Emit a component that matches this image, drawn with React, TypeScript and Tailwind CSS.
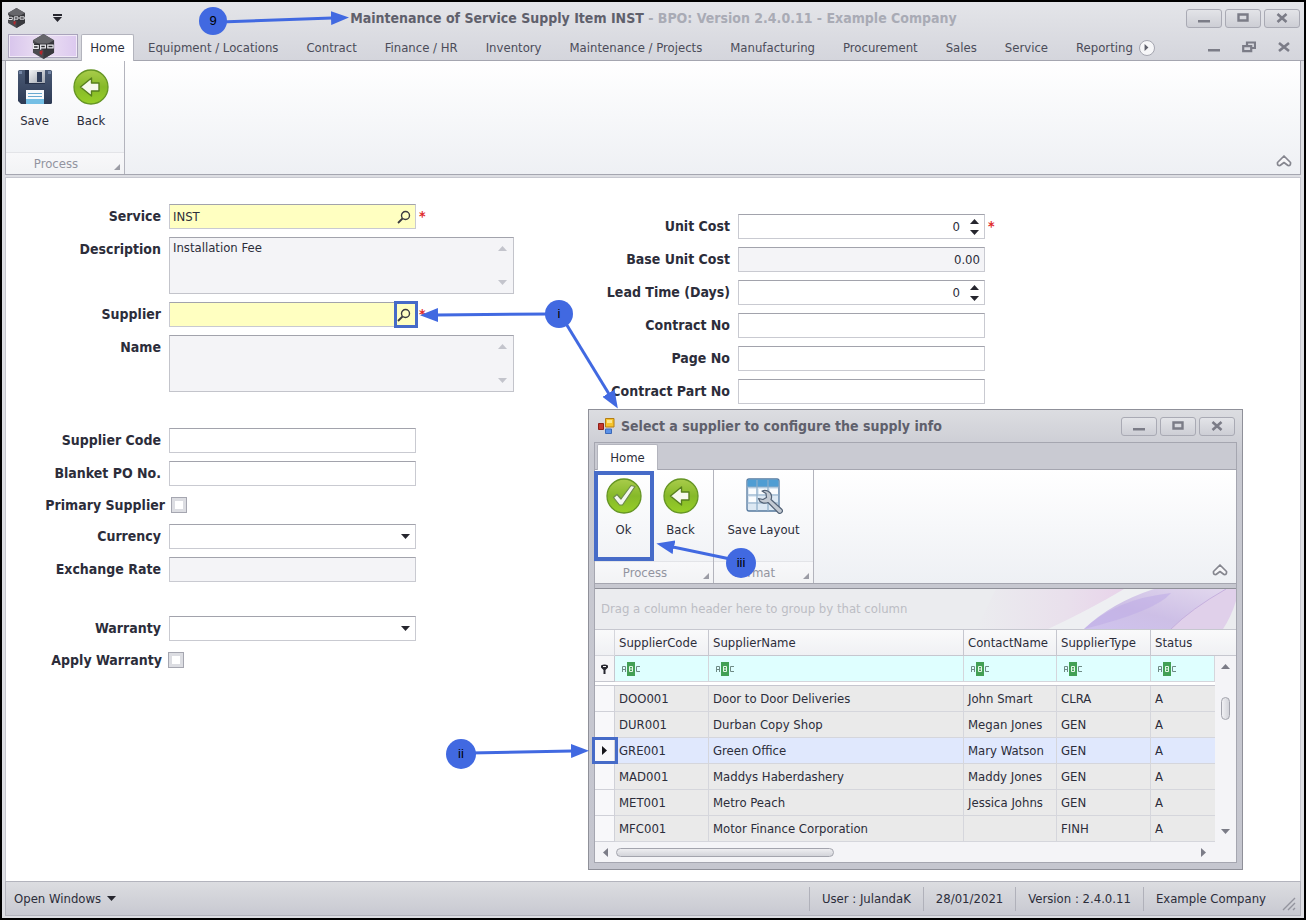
import type { ReactNode } from "react";

const MENU = [
  "Equipment / Locations",
  "Contract",
  "Finance / HR",
  "Inventory",
  "Maintenance / Projects",
  "Manufacturing",
  "Procurement",
  "Sales",
  "Service",
  "Reporting",
];

const SUPPLIERS = [
  ["DOO001", "Door to Door Deliveries", "John Smart", "CLRA", "A"],
  ["DUR001", "Durban Copy Shop", "Megan Jones", "GEN", "A"],
  ["GRE001", "Green Office", "Mary Watson", "GEN", "A"],
  ["MAD001", "Maddys Haberdashery", "Maddy Jones", "GEN", "A"],
  ["MET001", "Metro Peach", "Jessica Johns", "GEN", "A"],
  ["MFC001", "Motor Finance Corporation", "", "FINH", "A"],
];

const COLUMNS = ["SupplierCode", "SupplierName", "ContactName", "SupplierType", "Status"];

function Logo({ className }: { className: string }) {
  return (
    <svg viewBox="0 0 24 26" className={className} aria-hidden="true">
      <path d="M12 0 23 6.500v13L12 26 1 19.500v-13z" fill="#4b4b50" />
      <path d="M12 0 23 6.500 12 13 1 6.500z" fill="#66666b" />
      <path d="M12 13 23 6.500v13L12 26z" fill="#39393e" />
      <path d="M1 10h22v6H1z" fill="#2c2c30" />
      <path
        d="M1.500 9.500v5.500h5v-3h-5M9 16.500v-5h5v3h-5M16.500 11.500h5.500v3h-5.500z"
        fill="none"
        stroke="#e9e9ee"
        strokeWidth="1.300"
      />
      <path d="m8 18 3-1v2l-1 3-2-2z" fill="#b3262c" />
    </svg>
  );
}

function Triangle({ dir, className }: { dir: "up" | "down" | "left" | "right"; className: string }) {
  const d = {
    up: "M0 5 4.500 0 9 5z",
    down: "M0 0h9L4.500 5z",
    left: "M5 0v9L0 4.500z",
    right: "M0 0l5 4.500L0 9z",
  }[dir];
  const tall = dir === "left" || dir === "right";
  return (
    <svg
      width={tall ? 5 : 9}
      height={tall ? 9 : 5}
      viewBox={tall ? "0 0 5 9" : "0 0 9 5"}
      className={className}
      aria-hidden="true"
    >
      <path d={d} fill="currentColor" />
    </svg>
  );
}

function BackIcon() {
  return (
    <svg width="36" height="36" viewBox="0 0 36 36" aria-hidden="true">
      <defs>
        <linearGradient id="green" x1="0" y1="0" x2="0" y2="1">
          <stop offset="0" stopColor="#a9cc4b" />
          <stop offset="0.500" stopColor="#86b929" />
          <stop offset="1" stopColor="#97cf27" />
        </linearGradient>
      </defs>
      <circle cx="18" cy="18" r="17" fill="url(#green)" stroke="#659524" strokeWidth="1.300" />
      <path
        d="M7.500 18 18.500 9v5H26v8h-7.500v5z"
        fill="#f6f9ee"
        stroke="#577f1d"
        strokeWidth="1.400"
        strokeLinejoin="round"
      />
    </svg>
  );
}

function OkIcon() {
  return (
    <svg width="36" height="36" viewBox="0 0 36 36" aria-hidden="true">
      <circle cx="18" cy="18" r="17" fill="url(#green)" stroke="#659524" strokeWidth="1.300" />
      <path
        d="m7.500 19.500 3.500-3 4 4.500L25 7.500l4 1-12.500 18.500h-3z"
        fill="#f3f6f0"
        stroke="#6c8a4a"
        strokeWidth="1.200"
        strokeLinejoin="round"
      />
    </svg>
  );
}

function SaveIcon() {
  return (
    <svg width="36" height="36" viewBox="0 0 36 36" aria-hidden="true">
      <defs>
        <linearGradient id="disk" x1="0" y1="0" x2="0" y2="1">
          <stop offset="0" stopColor="#4a5a75" />
          <stop offset="1" stopColor="#2d3a54" />
        </linearGradient>
        <linearGradient id="metal" x1="0" y1="0" x2="1" y2="1">
          <stop offset="0" stopColor="#f2f4f6" />
          <stop offset="1" stopColor="#9fa5ae" />
        </linearGradient>
      </defs>
      <path d="M1 2.500Q1 1 2.500 1h31Q35 1 35 2.500v31q0 1.500-1.500 1.500H4l-3-3z" fill="url(#disk)" />
      <path d="M2 2h3v3H2zM31 2h3v3h-3z" fill="#7486a5" />
      <path d="M8 1h20v14H8z" fill="#26324a" />
      <path d="M12 1h16v13H12z" fill="url(#metal)" />
      <path d="M20 3h5v10h-5z" fill="#303e59" />
      <path d="M9 21h18v14H9z" fill="#f8fafc" />
      <path d="M9 30h18v5H9z" fill="#74bfe5" />
      <path d="M11 24.500h14M11 27.500h14" stroke="#69a9d0" strokeWidth="1" />
    </svg>
  );
}

function LayoutIcon() {
  return (
    <svg width="38" height="38" viewBox="0 0 38 38" aria-hidden="true">
      <path d="M2 4q0-2 2-2h28q2 0 2 2v28q0 2-2 2H4q-2 0-2-2z" fill="#dce8f3" stroke="#55799f" strokeWidth="1.300" />
      <path d="M2.500 4Q2.500 2.500 4 2.500h28q1.500 0 1.500 1.500v6h-31z" fill="#4f9dd3" />
      <path d="M2 10h32M2 18h32M2 26h32M12 3v31M23 3v31" stroke="#8dacc8" strokeWidth="1.200" />
      <path d="M4 12h7v5H4zM14 12h8v5h-8zM4 20h7v5H4zM25 12h8v5h-8z" fill="#fafcfe" />
      <path
        d="M17 14c4-1.500 9 .5 9.500 5 .2 1.500 0 2.500-.5 3.500l11 10c1.500 2-1.500 5-3.500 3.500L23 25.500c-4 1.800-8.500 0-9.500-4l4.500 1 3.500-2-.5-4z"
        fill="#c3cad3"
        stroke="#536276"
        strokeWidth="1.200"
        strokeLinejoin="round"
      />
    </svg>
  );
}

function RibbonButton({ icon, label, className }: { icon: ReactNode; label: string; className: string }) {
  return (
    <button className={`flex flex-col items-center gap-1 pt-2 ${className}`}>
      <span className="flex h-9 items-center justify-center">{icon}</span>
      <span className="whitespace-nowrap leading-6">{label}</span>
    </button>
  );
}

function RibbonGroup({ caption, children }: { caption: string; children: ReactNode }) {
  return (
    <div className="flex flex-col justify-between border-r border-[#b3b4bd]">
      <div className="flex">{children}</div>
      <div className="relative flex h-[22px] items-center justify-center border-t border-[#e3e4e8] bg-linear-to-b from-[#f8f8fa] to-[#f2f3f5] pr-[18px] text-[#9294a0]">
        {caption}
        <svg width="6" height="6" viewBox="0 0 6 6" className="absolute right-1 bottom-1" aria-hidden="true">
          <path d="M6 0v6H0z" fill="#9b9ca5" />
        </svg>
      </div>
    </div>
  );
}

function CollapseButton() {
  return (
    <button aria-label="Collapse ribbon" className="mr-2 mb-[6px] ml-auto self-end text-[#85868f]">
      <svg width="16" height="14" viewBox="0 0 16 14" aria-hidden="true">
        <path
          d="M8 2 1.500 8.500v1.500Q2 12 4 11.500L8 8.500l4 3q2 .5 2.500-1.500V8.500z"
          fill="#f7f7f9"
          stroke="currentColor"
          strokeWidth="1.700"
          strokeLinejoin="round"
        />
      </svg>
    </button>
  );
}

function WindowButtons() {
  const cls =
    "flex h-[19px] w-9 items-center justify-center rounded-[3px] border border-[#a9aab4] bg-linear-to-b from-[#e3e4e8] to-[#cdced5] text-[#7b7c87]";
  return (
    <div className="flex gap-[3px]">
      <button aria-label="Minimize" className={cls}>
        <svg width="12" height="10" viewBox="0 0 12 10"><path d="M0 7h12v2.500H0z" fill="currentColor" /></svg>
      </button>
      <button aria-label="Maximize" className={cls}>
        <svg width="12" height="10" viewBox="0 0 12 10"><path d="M1.500 1.500h9v6h-9z" fill="none" stroke="currentColor" strokeWidth="2.400" /></svg>
      </button>
      <button aria-label="Close" className={cls}>
        <svg width="12" height="10" viewBox="0 0 12 10"><path d="m1.500 1 9 8m0-8-9 8" stroke="currentColor" strokeWidth="2.600" /></svg>
      </button>
    </div>
  );
}

const BOX = "flex h-[25px] w-[247px] border border-[#c9cad1] border-t-[#a2a3ac]";

function Row({ id, label, wide, children }: { id: string; label: string; wide?: boolean; children: ReactNode }) {
  return (
    <div className="flex gap-2">
      <label
        htmlFor={id}
        className={`shrink-0 text-right text-sm leading-[25px] font-bold whitespace-nowrap ${wide ? "w-[155px]" : "w-[150px]"}`}
      >
        {label}
      </label>
      {children}
    </div>
  );
}

function Star() {
  return <span className="-ml-[5px] text-sm leading-[24px] font-bold text-[#e02a2a]">*</span>;
}

function SearchField({ id, value }: { id: string; value: string }) {
  return (
    <div className={`${BOX} bg-[#ffffc1]`}>
      <input id={id} defaultValue={value} className="min-w-0 flex-1 bg-transparent px-[3px] outline-none" />
      <button aria-label="Look up" className="flex w-[22px] items-center justify-center">
        <svg width="14" height="14" viewBox="0 0 14 14" aria-hidden="true">
          <circle cx="8.500" cy="5.500" r="4" fill="none" stroke="#3b3b40" strokeWidth="1.400" />
          <path d="M5.500 8.500 1 13" stroke="#3b3b40" strokeWidth="1.800" />
        </svg>
      </button>
    </div>
  );
}

function MemoField({ id, value }: { id: string; value: string }) {
  return (
    <div className="flex h-[57px] w-[345px] border border-[#c3c4cb] border-t-[#a2a3ac] bg-[#f4f4f7]">
      <textarea
        id={id}
        readOnly
        defaultValue={value}
        className="flex-1 resize-none overflow-hidden bg-transparent px-[3px] leading-[19px] outline-none"
      />
      <div className="flex w-[22px] flex-col items-center justify-between py-2 text-[#c3c4cc]">
        <Triangle dir="up" className="" />
        <Triangle dir="down" className="" />
      </div>
    </div>
  );
}

function TextField({ id, value = "", readOnly = false }: { id: string; value?: string; readOnly?: boolean }) {
  return (
    <input
      id={id}
      defaultValue={value}
      readOnly={readOnly}
      className={`${BOX} px-[4px] text-right outline-none ${readOnly ? "bg-[#f4f4f7]" : "bg-white"}`}
    />
  );
}

function NumberField({ id }: { id: string }) {
  return (
    <div className={`${BOX} bg-white`}>
      <input id={id} defaultValue="0" className="min-w-0 flex-1 bg-transparent pr-1 text-right outline-none" />
      <div className="flex w-5 flex-col items-center justify-center gap-[6px] text-[#26262e]">
        <button aria-label="Increase"><Triangle dir="up" className="block" /></button>
        <button aria-label="Decrease"><Triangle dir="down" className="block" /></button>
      </div>
    </div>
  );
}

function SelectField({ id }: { id: string }) {
  return (
    <div className="relative">
      <select id={id} className={`${BOX} appearance-none bg-white px-1 outline-none`}>
        <option value="" />
      </select>
      <Triangle dir="down" className="pointer-events-none absolute top-[10px] right-[6px] text-[#26262e]" />
    </div>
  );
}

function CheckRow({ id, label, end }: { id: string; label: string; end: string }) {
  return (
    <div className={`flex h-[22px] items-center justify-end gap-[6px] ${end}`}>
      <label htmlFor={id} className="text-sm font-bold whitespace-nowrap">{label}</label>
      <input
        id={id}
        type="checkbox"
        className="size-4 appearance-none border border-[#a5a6b0] bg-white inset-ring-3 inset-ring-[#dcdde2]"
      />
    </div>
  );
}

function AbcIcon() {
  return (
    <svg width="20" height="14" viewBox="0 0 20 14" aria-hidden="true">
      <path d="M1.500 10V4.500h3V10M1.500 7.500h3" fill="none" stroke="#6f8a85" strokeWidth="1" />
      <path d="M6 0h8v14H6z" fill="#43a055" />
      <path d="M8.500 4.500h3v5h-3zM8.500 7h3" fill="none" stroke="#e8f6ea" strokeWidth="1" />
      <path d="M19 4.500h-3.500v5H19" fill="none" stroke="#6f8a85" strokeWidth="1" />
    </svg>
  );
}

function SupplierTable() {
  const cell = "h-[26px] overflow-hidden border-r border-b border-[#d5d6dc] p-0 pl-1 whitespace-nowrap";
  return (
    <div className="relative">
      <table className="w-full table-fixed border-separate border-spacing-0">
        <colgroup>
          <col className="w-5" />
          <col className="w-[94px]" />
          <col />
          <col className="w-[93px]" />
          <col className="w-[94px]" />
          <col className="w-[64px]" />
          <col className="w-[21px]" />
        </colgroup>
        <thead>
          <tr className="bg-linear-to-b from-[#fafafb] to-[#eff0f3] text-left">
            <th className={cell} />
            {COLUMNS.map((c) => (
              <th
                key={c}
                colSpan={c === "Status" ? 2 : 1}
                className={`h-[26px] border-b border-[#c6c7cf] p-0 pl-1 font-normal whitespace-nowrap ${c === "Status" ? "" : "border-r"}`}
              >
                {c}
              </th>
            ))}
          </tr>
        </thead>
        <tbody>
          <tr className="bg-[#dfffff]">
            <td className="h-[26px] border-r border-b border-[#c6c7cf] bg-[#f6f6f8] p-0">
              <svg width="9" height="10" viewBox="0 0 9 10" className="mx-auto" aria-hidden="true">
                <path d="M1 1.500Q4.500-.5 8 1.500v2L5.500 6v4h-2V6L1 3.500z" fill="#26262e" />
                <path d="M3 2.500h3" stroke="#f6f6f8" strokeWidth="1" />
              </svg>
            </td>
            {COLUMNS.map((c) => (
              <td key={c} className={`${cell} pl-[6px]`}><AbcIcon /></td>
            ))}
            <td className="bg-[#f4f4f7]" />
          </tr>
          <tr className="bg-[#f4f4f7]">
            <td colSpan={6} className="h-1 border-b border-[#c6c7cf] bg-white p-0" />
            <td className="p-0" />
          </tr>
          {SUPPLIERS.map((row, i) => (
            <tr key={row[0]} className={i === 2 ? "bg-[#e0e8fd]" : "bg-[#eaeaea]"}>
              <td className="h-[26px] border-r border-b border-[#d0d1d8] bg-[#f8f8fa] p-0">
                {i === 2 && <Triangle dir="right" className="mx-auto text-[#15151a]" />}
              </td>
              {row.map((v, j) => (
                <td key={COLUMNS[j]} className={`${cell} ${j === 4 ? "border-r-0" : ""}`}>{v}</td>
              ))}
              <td className="bg-[#f4f4f7]" />
            </tr>
          ))}
        </tbody>
      </table>
      <div className="absolute top-[26px] right-0 bottom-0 flex w-[21px] flex-col items-center bg-[#f4f4f7] py-2 text-[#7b7c87]">
        <Triangle dir="up" className="shrink-0" />
        <div className="mt-7 h-[23px] w-[9px] rounded-full border border-[#a3a4ad] bg-linear-to-r from-[#f0f0f3] to-[#d3d4da]" />
        <Triangle dir="down" className="mt-auto shrink-0" />
      </div>
    </div>
  );
}

function SupplierDialog() {
  return (
    <section
      aria-label="Select a supplier"
      className="absolute top-[409px] left-[588px] w-[655px] border border-[#8f9099] bg-linear-to-b from-[#dcdde1] via-[#c8c9d1] via-10% to-[#c5c6cf] px-[5px] pb-[6px]"
    >
      <header className="flex h-8 items-center gap-[6px] pr-[2px] pl-1">
        <svg width="17" height="17" viewBox="0 0 17 17" aria-hidden="true">
          <path d="M7.500.5h8.500v8.500H7.500z" fill="#f5c32c" stroke="#b57d13" />
          <path d="M9 2h5v3H9z" fill="#fbe58b" />
          <path d="M.5 5.500h5v6h-5z" fill="#c5372c" stroke="#8e1f18" />
          <path d="M7.500 11h6v4.500h-6z" fill="#5b92e8" stroke="#3c69b8" />
        </svg>
        <h2 className="text-sm font-bold text-[#5f606c]">Select a supplier to configure the supply info</h2>
        <div className="ml-auto"><WindowButtons /></div>
      </header>
      <div className="border border-[#a5a6b0]">
        <div className="flex h-[27px] items-end border-b border-[#a5a6b0] bg-[#c9cad2] pl-[2px]">
          <button className="-mb-px h-[26px] w-[61px] rounded-t-xs border border-b-0 border-[#b3b4bd] bg-white">Home</button>
        </div>
        <div className="flex h-[114px] border-b border-[#a5a6b0] bg-linear-to-b from-white to-[#eef0f4]">
          <RibbonGroup caption="Process">
            <RibbonButton icon={<OkIcon />} label="Ok" className="w-[57px]" />
            <RibbonButton icon={<BackIcon />} label="Back" className="w-[61px] pr-1" />
          </RibbonGroup>
          <RibbonGroup caption="Format">
            <RibbonButton icon={<LayoutIcon />} label="Save Layout" className="w-[99px]" />
          </RibbonGroup>
          <CollapseButton />
        </div>
        <div className="mt-1 border-t border-[#8f9099] bg-[#f4f4f7]">
          <div className="relative flex h-[41px] items-center overflow-hidden border-b border-[#c6c7cf] bg-[#ebecef] pl-[6px] text-[#bcbdc4]">
            <svg width="260" height="40" viewBox="0 0 260 40" className="absolute top-0 right-0" aria-hidden="true">
              <defs>
                <linearGradient id="swirlPink" x1="0" x2="1">
                  <stop offset="0" stopColor="#ebecef" />
                  <stop offset="0.600" stopColor="#e9e0ec" />
                  <stop offset="1" stopColor="#e8d3ea" />
                </linearGradient>
                <linearGradient id="swirlViolet" x1="0" y1="1" x2="1" y2="0">
                  <stop offset="0" stopColor="#cfc3ee" />
                  <stop offset="0.400" stopColor="#cdbfe6" />
                  <stop offset="1" stopColor="#e3d9ee" />
                </linearGradient>
              </defs>
              <path d="M20 0h130Q110 22 75 40H0z" fill="url(#swirlPink)" />
              <path d="M148 0h28Q140 16 108 40H72Q115 20 148 0z" fill="#eeeff2" />
              <path d="M178 0h82L240 40H108Q135 14 178 0z" fill="url(#swirlViolet)" />
              <path d="M108 40Q140 10 195 4 180 22 108 40z" fill="#bfaee6" opacity="0.600" />
              <path d="M195 40Q215 20 250 0h10v12Q255 28 247 40z" fill="#e0d0ea" />
              <path d="M195 40Q215 20 250 0" fill="none" stroke="#c6b0de" />
            </svg>
            <span className="relative">Drag a column header here to group by that column</span>
          </div>
          <SupplierTable />
          <div className="flex h-5 items-center pr-[30px] pl-2 text-[#7b7c87]">
            <Triangle dir="left" className="" />
            <div className="ml-2 h-[9px] w-[218px] rounded-full border border-[#a3a4ad] bg-linear-to-b from-[#eeeef1] to-[#d3d4da]" />
            <Triangle dir="right" className="ml-auto" />
          </div>
        </div>
      </div>
    </section>
  );
}

function Annotations() {
  const badge =
    "absolute flex items-center justify-center rounded-full bg-[#4169e1] font-['Liberation_Sans',sans-serif] text-[13px] text-black";
  return (
    <div className="pointer-events-none absolute inset-0">
      <div className="absolute top-[301px] left-[394px] h-[27px] w-[24px] border-3 border-[#466bc8]" />
      <div className="absolute top-[471px] left-[594px] h-[90px] w-[60px] border-4 border-[#466bc8]" />
      <div className="absolute top-[737px] left-[592px] h-[27px] w-[26px] border-3 border-[#466bc8]" />
      <svg width="760" height="780" viewBox="0 0 760 780" className="absolute top-0 left-0" aria-hidden="true">
        <defs>
          <marker id="head" markerUnits="userSpaceOnUse" markerWidth="18" markerHeight="14" refX="1" refY="7" orient="auto">
            <path d="M0 0 18 7 0 14z" fill="#4169e1" />
          </marker>
        </defs>
        <g stroke="#4169e1" strokeWidth="3">
          <path d="M220 22 332 18" markerEnd="url(#head)" />
          <path d="M550 314 437 315" markerEnd="url(#head)" />
          <path d="M565 322 609 394" markerEnd="url(#head)" />
          <path d="M470 753 572 751" markerEnd="url(#head)" />
          <path d="M735 560 673 547" markerEnd="url(#head)" />
        </g>
      </svg>
      <span className={`${badge} top-[7px] left-[199px] size-7`}>9</span>
      <span className={`${badge} top-[300px] left-[545px] size-7`}>i</span>
      <span className={`${badge} top-[739px] left-[446px] size-[30px]`}>ii</span>
      <span className={`${badge} top-[548px] left-[726px] size-[30px]`}>iii</span>
    </div>
  );
}

export default function App() {
  return (
    <div className="relative flex min-h-screen flex-col border-2 border-black bg-[#dddee3] px-[3px] pb-[2px] font-['DejaVu_Sans_Condensed','DejaVu_Sans',sans-serif] text-[13px] text-[#2c2d3a]">
      <header className="-mx-[3px] bg-linear-to-b from-[#e4e5e9] to-[#d4d5dc]">
        <div className="grid h-8 grid-cols-[1fr_auto_1fr] items-center pr-1 pl-[5px]">
          <div className="flex items-center gap-[27px]">
            <Logo className="h-5 w-[19px]" />
            <button aria-label="Customize quick access" className="flex flex-col items-center gap-px text-[#26262e]">
              <span className="h-[2px] w-[9px] bg-current" />
              <Triangle dir="down" className="" />
            </button>
          </div>
          <h1 className="text-sm font-bold text-[#a9abb5]">
            <span className="text-[#5f606c]">Maintenance of Service Supply Item INST</span> - BPO: Version 2.4.0.11 -
            Example Company
          </h1>
          <div className="flex justify-end"><WindowButtons /></div>
        </div>
        <nav className="flex h-[27px] items-end border-b border-[#a5a6b0] pl-[6px]">
          <button
            aria-label="Application menu"
            className="mr-[3px] mb-[2px] flex h-[24px] w-[70px] items-center justify-center border border-[#a9a3bb] bg-linear-to-r from-[#d8c5ec] via-[#ece0f3] to-[#dcc9ef] inset-ring inset-ring-[#f1eaf7]"
          >
            <Logo className="h-[25px] w-[23px]" />
          </button>
          <button className="-mb-px h-[27px] w-[53px] rounded-t-xs border border-b-0 border-[#b3b4bd] bg-white">
            Home
          </button>
          <div className="flex h-full items-center pt-px">
            {MENU.map((m) => (
              <button key={m} className="px-[14px] whitespace-nowrap text-[#4b4c59]">{m}</button>
            ))}
            <button aria-label="More tabs" className="-ml-2 flex size-4 items-center justify-center rounded-full border border-[#a5a6b0] bg-[#f6f6f8] text-[#5f606c]">
              <Triangle dir="right" className="h-[7px]" />
            </button>
          </div>
          <div className="ml-auto flex h-full items-center gap-[22px] pr-[14px] text-[#7b7c87]">
            <button aria-label="Minimize document">
              <svg width="12" height="12" viewBox="0 0 12 12"><path d="M0 8h12v2.500H0z" fill="currentColor" /></svg>
            </button>
            <button aria-label="Restore document">
              <svg width="14" height="12" viewBox="0 0 14 12">
                <path d="M5 4V1.500h8V7h-3M1.200 5.200h8v5h-8z" fill="none" stroke="currentColor" strokeWidth="2.200" />
              </svg>
            </button>
            <button aria-label="Close document">
              <svg width="12" height="12" viewBox="0 0 12 12"><path d="m1 2 10 8m0-8L1 10" stroke="currentColor" strokeWidth="2.600" /></svg>
            </button>
          </div>
        </nav>
      </header>

      <div className="flex h-[114px] border-x border-b border-[#a5a6b0] bg-linear-to-b from-white to-[#eef0f4]">
        <RibbonGroup caption="Process">
          <RibbonButton icon={<SaveIcon />} label="Save" className="w-[57px]" />
          <RibbonButton icon={<BackIcon />} label="Back" className="w-[61px] pr-[5px]" />
        </RibbonGroup>
        <CollapseButton />
      </div>

      <main className="mt-[2px] flex flex-1 gap-[66px] border-x border-t border-[#c6c7cf] bg-white">
        <form className="flex w-[508px] flex-col gap-2 pt-[26px]">
          <Row wide id="service" label="Service"><SearchField id="service" value="INST" /><Star /></Row>
          <Row wide id="description" label="Description"><MemoField id="description" value="Installation Fee" /></Row>
          <Row wide id="supplier" label="Supplier"><SearchField id="supplier" value="" /><Star /></Row>
          <Row wide id="name" label="Name"><MemoField id="name" value="" /></Row>
          <div className="mt-7 flex flex-col gap-2">
            <Row wide id="code" label="Supplier Code"><TextField id="code" /></Row>
            <Row wide id="blanket" label="Blanket PO No."><TextField id="blanket" /></Row>
            <CheckRow id="primary" label="Primary Supplier" end="w-[181px]" />
            <Row wide id="currency" label="Currency"><SelectField id="currency" /></Row>
            <Row wide id="rate" label="Exchange Rate"><TextField id="rate" readOnly /></Row>
          </div>
          <div className="mt-[26px] flex flex-col gap-2">
            <Row wide id="warranty" label="Warranty"><SelectField id="warranty" /></Row>
            <CheckRow id="apply" label="Apply Warranty" end="w-[178px]" />
          </div>
        </form>
        <form className="flex flex-col gap-2 pt-9">
          <Row id="unit" label="Unit Cost"><NumberField id="unit" /><Star /></Row>
          <Row id="base" label="Base Unit Cost"><TextField id="base" value="0.00" readOnly /></Row>
          <Row id="lead" label="Lead Time (Days)"><NumberField id="lead" /></Row>
          <Row id="contract" label="Contract No"><TextField id="contract" /></Row>
          <Row id="page" label="Page No"><TextField id="page" /></Row>
          <Row id="part" label="Contract Part No"><TextField id="part" /></Row>
        </form>
      </main>

      <footer className="flex h-[35px] items-center border border-[#b3b4bd] bg-linear-to-b from-[#dcdde1] to-[#c8c9d1] pl-2">
        <button className="flex items-center gap-[6px]">
          Open Windows <Triangle dir="down" className="text-[#26262e]" />
        </button>
        <div className="ml-auto flex">
          {["User : JulandaK", "28/01/2021", "Version : 2.4.0.11", "Example Company"].map((t) => (
            <span key={t} className="border-l border-[#b0b1ba] px-3 leading-6">{t}</span>
          ))}
        </div>
        <svg width="14" height="14" viewBox="0 0 14 14" className="mt-auto mr-1 mb-1 ml-1" aria-hidden="true">
          <path d="M1 13 13 1M6 13l7-7M11 13l2-2" stroke="#93949e" strokeWidth="1.400" />
        </svg>
      </footer>

      <div className="absolute -top-[2px] -left-[2px]">
        <SupplierDialog />
      </div>
      <div className="absolute -top-[2px] -left-[2px]">
        <Annotations />
      </div>
    </div>
  );
}
